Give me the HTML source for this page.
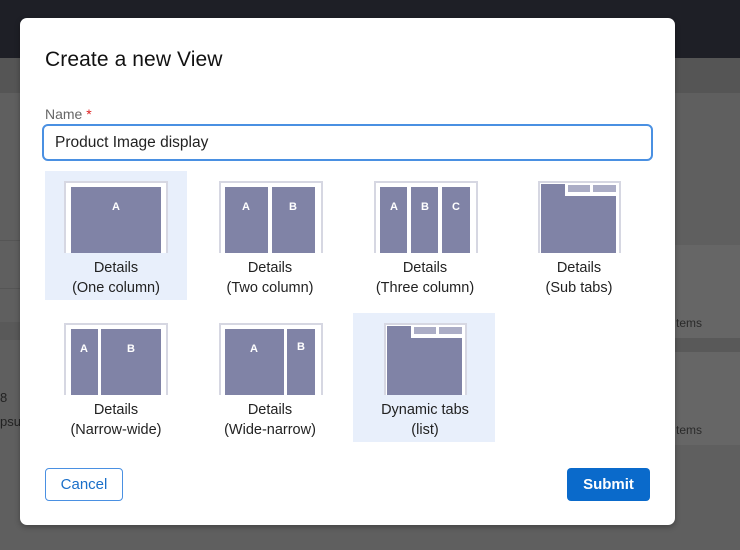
<!DOCTYPE html>
<html><head><meta charset="utf-8"><style>
*{margin:0;padding:0;box-sizing:border-box}
body{width:740px;height:550px;overflow:hidden;position:relative;background:#5f5f5f;font-family:"Liberation Sans","DejaVu Sans",sans-serif}
.abs{position:absolute}
.dlg{position:absolute;left:20px;top:18px;width:655px;height:507px;background:#fff;border-radius:7px;box-shadow:0 2px 6px rgba(0,0,0,.3)}
h1{position:absolute;left:45px;top:48px;font-size:21px;font-weight:normal;color:#111;letter-spacing:.1px}
.lbl{position:absolute;left:45px;top:106px;font-size:14px;color:#666}
.lbl b{color:#d22;font-weight:normal}
.inp{position:absolute;left:42px;top:124px;width:611px;height:37px;border:2px solid #4a90e2;border-radius:6px;font-size:15.5px;color:#222;padding:8px 0 0 11px}
.tile{position:absolute;width:142px;height:129px}
.sel{background:#e8effb}
.cap{position:absolute;width:160px;text-align:center;font-size:14.5px;line-height:20px;color:#222}
svg{position:absolute}
svg text{font-family:"Liberation Sans",sans-serif}
.btn{position:absolute;top:468px;height:33px;border-radius:4px;font-size:15px;display:flex;align-items:center;justify-content:center}
</style></head><body>
<div class="abs" style="left:0;top:0;width:740px;height:58px;background:#1e1f26"></div>
<div class="abs" style="left:0;top:58px;width:740px;height:35px;background:#555"></div>
<div class="abs" style="left:675px;top:245px;width:65px;height:93px;background:#666"></div>
<div class="abs" style="left:675px;top:338px;width:65px;height:14px;background:#595959"></div>
<div class="abs" style="left:675px;top:352px;width:65px;height:93px;background:#666"></div>
<div class="abs" style="left:676px;top:316px;font-size:12px;color:#2a2a2a">tems</div>
<div class="abs" style="left:676px;top:423px;font-size:12px;color:#2a2a2a">tems</div>
<div class="abs" style="left:0;top:240px;width:20px;height:1px;background:#555"></div>
<div class="abs" style="left:0;top:288px;width:20px;height:1px;background:#555"></div>
<div class="abs" style="left:0;top:322px;width:20px;height:18px;background:#595959"></div>
<div class="abs" style="left:0;top:390px;font-size:13px;color:#222">8</div>
<div class="abs" style="left:0;top:414px;font-size:13px;color:#222">psu</div>

<div class="dlg"></div>
<h1>Create a new View</h1>
<div class="lbl">Name <b>*</b></div>
<div class="inp">Product Image display</div>

<div class="tile sel" style="left:45px;top:171px"></div>
<div class="tile sel" style="left:353px;top:313px"></div>

<svg style="left:64px;top:181px" width="104" height="72" viewBox="0 0 104 72"><path d="M1 72V1H103V72" fill="#fff" stroke="#d6d7e2" stroke-width="2"/><rect x="7" y="6" width="90" height="66" fill="#8083a6"/><text x="52" y="29" fill="#fff" font-size="11" font-weight="bold" text-anchor="middle">A</text></svg>
<div class="cap" style="left:36px;top:258px">Details<br>(One column)</div>

<svg style="left:219px;top:181px" width="104" height="72" viewBox="0 0 104 72"><path d="M1 72V1H103V72" fill="#fff" stroke="#d6d7e2" stroke-width="2"/><rect x="6" y="6" width="43" height="66" fill="#8083a6"/><rect x="53" y="6" width="43" height="66" fill="#8083a6"/><text x="27" y="29" fill="#fff" font-size="11" font-weight="bold" text-anchor="middle">A</text><text x="74" y="29" fill="#fff" font-size="11" font-weight="bold" text-anchor="middle">B</text></svg>
<div class="cap" style="left:190px;top:258px">Details<br>(Two column)</div>

<svg style="left:374px;top:181px" width="104" height="72" viewBox="0 0 104 72"><path d="M1 72V1H103V72" fill="#fff" stroke="#d6d7e2" stroke-width="2"/><rect x="6" y="6" width="27" height="66" fill="#8083a6"/><rect x="37" y="6" width="27" height="66" fill="#8083a6"/><rect x="68" y="6" width="28" height="66" fill="#8083a6"/><text x="20" y="29" fill="#fff" font-size="11" font-weight="bold" text-anchor="middle">A</text><text x="51" y="29" fill="#fff" font-size="11" font-weight="bold" text-anchor="middle">B</text><text x="82" y="29" fill="#fff" font-size="11" font-weight="bold" text-anchor="middle">C</text></svg>
<div class="cap" style="left:345px;top:258px">Details<br>(Three column)</div>

<svg style="left:538px;top:181px" width="83" height="72" viewBox="0 0 83 72"><path d="M1 72V1H82V72" fill="#fff" stroke="#d6d7e2" stroke-width="2"/><path d="M3 3H27V15H78V72H3Z" fill="#8083a6"/><rect x="30" y="4" width="22" height="7" fill="#abadc6"/><rect x="55" y="4" width="23" height="7" fill="#abadc6"/></svg>
<div class="cap" style="left:499px;top:258px">Details<br>(Sub tabs)</div>

<svg style="left:64px;top:323px" width="104" height="72" viewBox="0 0 104 72"><path d="M1 72V1H103V72" fill="#fff" stroke="#d6d7e2" stroke-width="2"/><rect x="7" y="6" width="27" height="66" fill="#8083a6"/><rect x="37" y="6" width="60" height="66" fill="#8083a6"/><text x="20" y="29" fill="#fff" font-size="11" font-weight="bold" text-anchor="middle">A</text><text x="67" y="29" fill="#fff" font-size="11" font-weight="bold" text-anchor="middle">B</text></svg>
<div class="cap" style="left:36px;top:400px">Details<br>(Narrow-wide)</div>

<svg style="left:219px;top:323px" width="104" height="72" viewBox="0 0 104 72"><path d="M1 72V1H103V72" fill="#fff" stroke="#d6d7e2" stroke-width="2"/><rect x="6" y="6" width="59" height="66" fill="#8083a6"/><rect x="68" y="6" width="28" height="66" fill="#8083a6"/><text x="35" y="29" fill="#fff" font-size="11" font-weight="bold" text-anchor="middle">A</text><text x="82" y="27" fill="#fff" font-size="11" font-weight="bold" text-anchor="middle">B</text></svg>
<div class="cap" style="left:190px;top:400px">Details<br>(Wide-narrow)</div>

<svg style="left:384px;top:323px" width="83" height="72" viewBox="0 0 83 72"><path d="M1 72V1H82V72" fill="#fff" stroke="#d6d7e2" stroke-width="2"/><path d="M3 3H27V15H78V72H3Z" fill="#8083a6"/><rect x="30" y="4" width="22" height="7" fill="#abadc6"/><rect x="55" y="4" width="23" height="7" fill="#abadc6"/></svg>
<div class="cap" style="left:345px;top:400px">Dynamic tabs<br>(list)</div>

<div class="btn" style="left:45px;width:78px;border:1px solid #4a90e2;color:#1a6fc9">Cancel</div>
<div class="btn" style="left:567px;width:83px;background:#0a6acb;color:#fff;font-weight:bold">Submit</div>
</body></html>
